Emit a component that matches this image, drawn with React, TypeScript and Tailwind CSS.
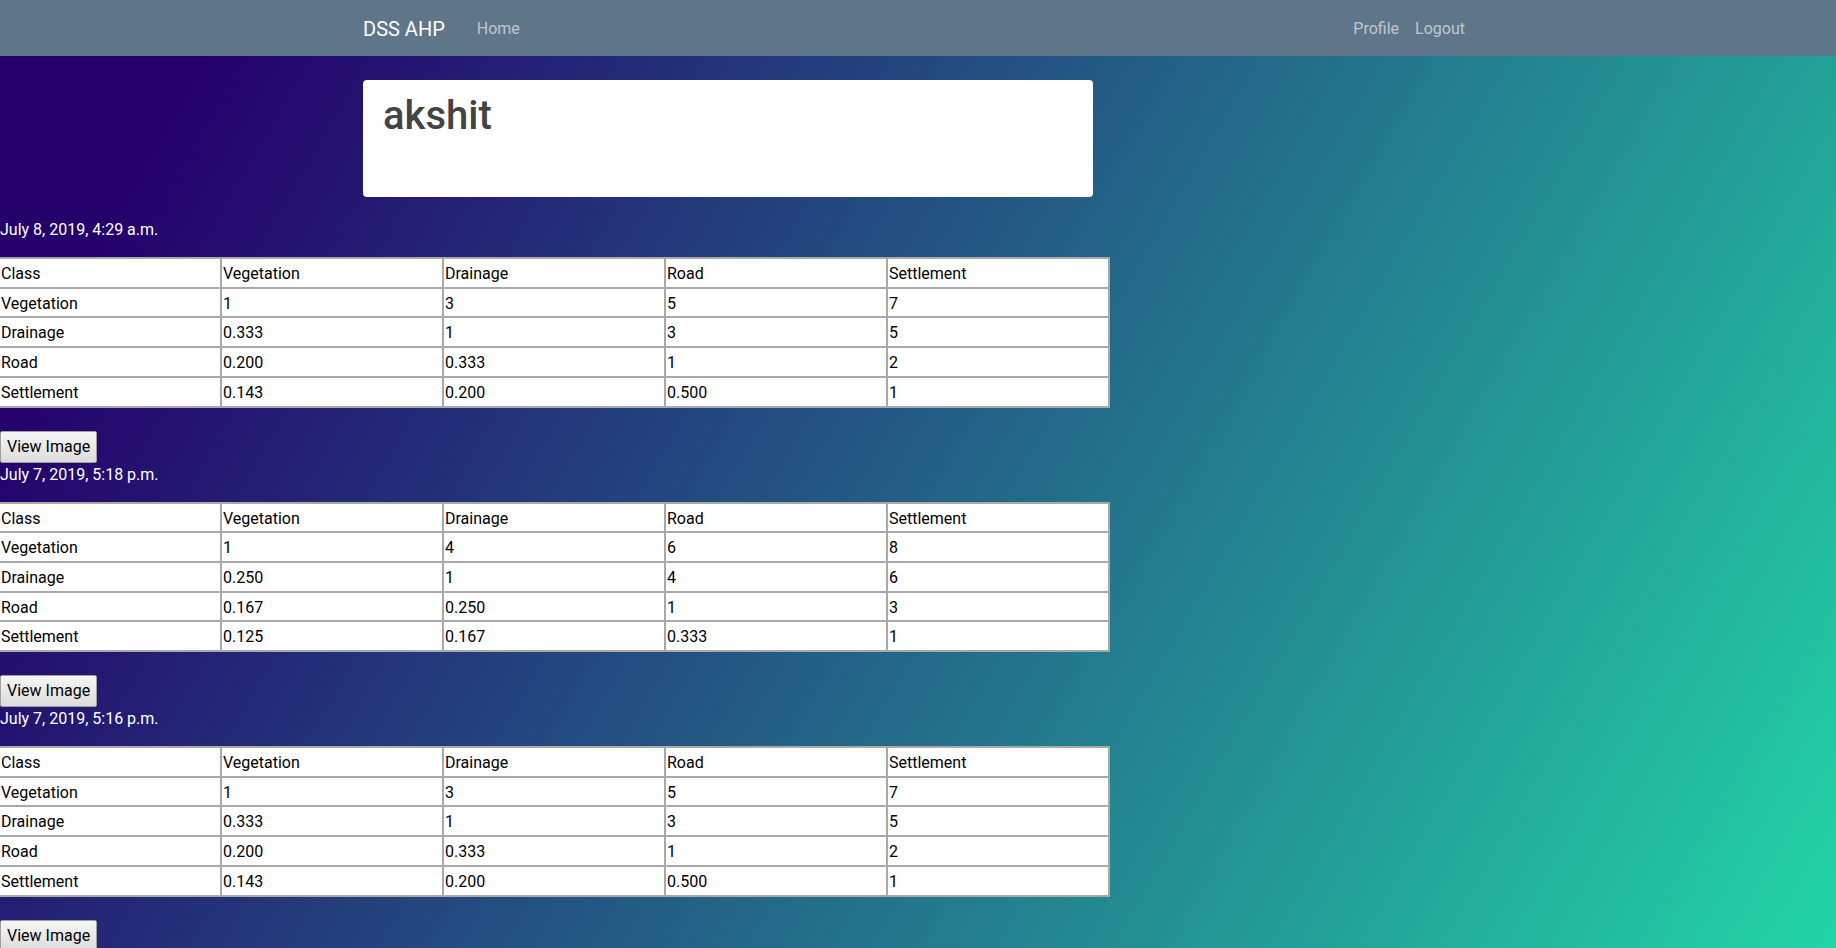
import React from 'react'

type Entry = {
  date: string
  rows: string[][]
}

const header = ['Class', 'Vegetation', 'Drainage', 'Road', 'Settlement']

const entries: Entry[] = [
  {
    date: 'July 8, 2019, 4:29 a.m.',
    rows: [
      ['Vegetation', '1', '3', '5', '7'],
      ['Drainage', '0.333', '1', '3', '5'],
      ['Road', '0.200', '0.333', '1', '2'],
      ['Settlement', '0.143', '0.200', '0.500', '1'],
    ],
  },
  {
    date: 'July 7, 2019, 5:18 p.m.',
    rows: [
      ['Vegetation', '1', '4', '6', '8'],
      ['Drainage', '0.250', '1', '4', '6'],
      ['Road', '0.167', '0.250', '1', '3'],
      ['Settlement', '0.125', '0.167', '0.333', '1'],
    ],
  },
  {
    date: 'July 7, 2019, 5:16 p.m.',
    rows: [
      ['Vegetation', '1', '3', '5', '7'],
      ['Drainage', '0.333', '1', '3', '5'],
      ['Road', '0.200', '0.333', '1', '2'],
      ['Settlement', '0.143', '0.200', '0.500', '1'],
    ],
  },
]

const Matrix: React.FC<{ rows: string[][] }> = ({ rows }) => (
  <table className="mt-[15px] -ml-[2px] w-[1112px] table-fixed border-collapse bg-white text-black">
    <tbody>
      {[header, ...rows].map((row, i) => (
        <tr key={i}>
          {row.map((cell, j) => (
            <td key={j} className="border-2 border-[#a9a9a9] px-px pt-[3px] pb-px text-left text-base leading-[23.7px]">
              {cell}
            </td>
          ))}
        </tr>
      ))}
    </tbody>
  </table>
)

const App: React.FC = () => {
  return (
    <div className="min-h-screen bg-fixed bg-[linear-gradient(120deg,#24006b_10%,#23d5a6_100%)] font-['Roboto',sans-serif] text-base leading-6">
      {/* Navbar */}
      <nav className="h-14 bg-[#5f7589]">
        <div className="mx-auto flex h-full w-[1140px] items-center px-[15px] pt-[2px]">
          <span className="text-xl leading-[30px] text-white">DSS AHP</span>
          <a className="ml-8 text-white/60">Home</a>
          <div className="ml-auto flex">
            <a className="px-2 text-white/60">Profile</a>
            <a className="px-2 text-white/60">Logout</a>
          </div>
        </div>
      </nav>

      {/* Profile card */}
      <div className="mx-auto w-[1140px] px-[15px]">
        <div className="mt-6 h-[117px] w-[730px] rounded bg-white px-5 pt-3">
          <h1 className="text-[40px] font-medium leading-[48px] text-[#444]">akshit</h1>
        </div>
      </div>

      {/* History */}
      <div className="mt-[21px]">
        {entries.map((entry, i) => (
          <div key={i}>
            <div className="text-white">{entry.date}</div>
            <Matrix rows={entry.rows} />
            <button className="mt-[23px] block rounded-[2px] border border-[#a0a0a0] bg-gradient-to-b from-[#f6f6f6] to-[#dcdcdc] px-[6px] py-[3px] leading-6 text-black">
              View Image
            </button>
          </div>
        ))}
      </div>
    </div>
  )
}

export default App
